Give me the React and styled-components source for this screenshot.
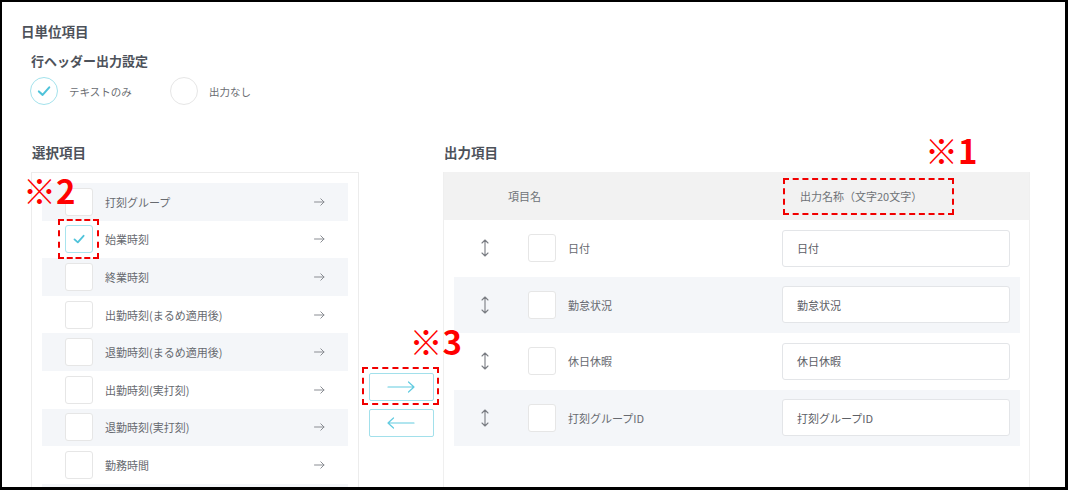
import React from 'react';
import styled, { createGlobalStyle } from 'styled-components';

const GlobalStyle = createGlobalStyle`
  html, body { margin: 0; padding: 0; background: #fff; }
  body { font-family: "Noto Sans CJK JP", "Noto Sans", sans-serif; }
`;

const leftItems = [
  '打刻グループ',
  '始業時刻',
  '終業時刻',
  '出勤時刻(まるめ適用後)',
  '退勤時刻(まるめ適用後)',
  '出勤時刻(実打刻)',
  '退勤時刻(実打刻)',
  '勤務時間',
  '',
];

const outputItems = ['日付', '勤怠状況', '休日休暇', '打刻グループID'];

const CheckMark = ({ size = 14 }) => (
  <svg width={size} height={size} viewBox="0 0 14 14" fill="none">
    <path d="M2.5 7.4 L5.8 10.4 L11.6 3.8" stroke="#4fc3da" strokeWidth="1.8" strokeLinecap="round" strokeLinejoin="round" />
  </svg>
);

const SmallArrow = () => (
  <svg width="11" height="8" viewBox="0 0 11 8" fill="none">
    <path d="M0.5 4 H10 M6.8 0.8 L10 4 L6.8 7.2" stroke="#8a8d93" strokeWidth="1" strokeLinecap="round" strokeLinejoin="round" />
  </svg>
);

const LongArrow = ({ dir }) => (
  <svg width="28" height="12" viewBox="0 0 28 12" fill="none" style={dir === 'left' ? { transform: 'scaleX(-1)' } : undefined}>
    <path d="M1 6 H27 M21.5 1 L27 6 L21.5 11" stroke="#62cbe0" strokeWidth="1.2" strokeLinecap="round" strokeLinejoin="round" />
  </svg>
);

const DragIcon = () => (
  <svg width="10" height="18" viewBox="0 0 10 18" fill="none">
    <path d="M5 1 V17 M2 4 L5 1 L8 4 M2 14 L5 17 L8 14" stroke="#7a7d83" strokeWidth="1.1" strokeLinecap="round" strokeLinejoin="round" />
  </svg>
);

const App = () => {
  return (
    <>
      <GlobalStyle />
      <Frame>
        <Title>日単位項目</Title>
        <Section>
          <SubTitle>行ヘッダー出力設定</SubTitle>
          <RadioGroup>
            <RadioOption>
              <RadioCircle $checked>
                <CheckMark size={16} />
              </RadioCircle>
              <RadioLabel>テキストのみ</RadioLabel>
            </RadioOption>
            <RadioOption>
              <RadioCircle />
              <RadioLabel>出力なし</RadioLabel>
            </RadioOption>
          </RadioGroup>

          <Lists>
            <LeftColumn>
              <ColumnTitle>選択項目</ColumnTitle>
              <ListPanel>
                {leftItems.map((label, i) => (
                  <ListRow key={i} $odd={i % 2 === 0}>
                    {i === 1 ? (
                      <Marked $inset="-6px -6px -6px -7px">
                        <Checkbox $checked>
                          <CheckMark />
                        </Checkbox>
                        <Note $x={-42} $y={-51}>※2</Note>
                      </Marked>
                    ) : (
                      <Checkbox />
                    )}
                    <RowLabel>{label}</RowLabel>
                    <SmallArrow />
                  </ListRow>
                ))}
              </ListPanel>
            </LeftColumn>

            <MiddleColumn>
              <Marked $inset="-6px -5px -4px -7px">
                <MoveButton>
                  <LongArrow />
                </MoveButton>
                <Note $x={41} $y={-48}>※3</Note>
              </Marked>
              <MoveButton>
                <LongArrow dir="left" />
              </MoveButton>
            </MiddleColumn>

            <RightColumn>
              <ColumnTitle>出力項目</ColumnTitle>
              <TablePanel>
                <TableHeader>
                  <HeaderName>項目名</HeaderName>
                  <Marked $inset="0">
                    <HeaderCell>出力名称（文字20文字）</HeaderCell>
                    <Note $x={142} $y={-44}>※1</Note>
                  </Marked>
                </TableHeader>
                {outputItems.map((label, i) => (
                  <TableRow key={label} $odd={i % 2 === 1}>
                    <DragHandle>
                      <DragIcon />
                    </DragHandle>
                    <Checkbox />
                    <ItemName>{label}</ItemName>
                    <NameInput>{label}</NameInput>
                  </TableRow>
                ))}
              </TablePanel>
            </RightColumn>
          </Lists>
        </Section>
      </Frame>
    </>
  );
};

const Frame = styled.div`
  position: relative;
  box-sizing: border-box;
  width: 1068px;
  height: 490px;
  overflow: hidden;
  border: 2px solid #000;
  border-right-width: 3px;
  border-bottom-width: 3px;
  padding: 19px 0 0 19px;
  background: #fff;
`;

const Title = styled.div`
  font-size: 13.5px;
  font-weight: 700;
  line-height: 20px;
  color: #4d525a;
`;

const Section = styled.div`
  padding-left: 10px;
  margin-top: 10px;
`;

const SubTitle = styled.div`
  font-size: 13px;
  font-weight: 700;
  line-height: 20px;
  color: #4d525a;
`;

const RadioGroup = styled.div`
  display: grid;
  grid-template-columns: 140px auto;
  justify-content: start;
  margin-top: 6px;
  margin-left: -1px;
`;

const RadioOption = styled.div`
  display: flex;
  align-items: center;
  gap: 11px;
`;

const RadioCircle = styled.div`
  box-sizing: border-box;
  width: 28px;
  height: 28px;
  border-radius: 50%;
  border: 1px solid ${p => (p.$checked ? '#a3e2ec' : '#e6e6e6')};
  display: flex;
  align-items: center;
  justify-content: center;
`;

const RadioLabel = styled.span`
  font-size: 10.5px;
  color: #6a6d72;
`;

const Lists = styled.div`
  display: flex;
  margin-top: 37px;
`;

const LeftColumn = styled.div`
  width: 328px;
  flex-shrink: 0;
`;

const ColumnTitle = styled.div`
  font-size: 13.5px;
  font-weight: 700;
  line-height: 20px;
  color: #4d525a;
  margin-bottom: 10px;
  padding-left: 1px;
`;

const ListPanel = styled.div`
  box-sizing: border-box;
  border: 1px solid #ececec;
  padding: 10px;
  height: 360px;
`;

const ListRow = styled.div`
  display: flex;
  align-items: center;
  height: 37.6px;
  padding: 0 23px;
  background: ${p => (p.$odd ? '#f4f6f9' : '#fff')};
`;

const Checkbox = styled.div`
  box-sizing: border-box;
  width: 28px;
  height: 28px;
  flex-shrink: 0;
  border: 1px solid ${p => (p.$checked ? '#a8e4ee' : '#e6e6e6')};
  border-radius: 3px;
  background: #fff;
  display: flex;
  align-items: center;
  justify-content: center;
`;

const RowLabel = styled.span`
  flex: 1;
  margin-left: 12px;
  font-size: 11px;
  color: #676a70;
`;

const MiddleColumn = styled.div`
  width: 84px;
  flex-shrink: 0;
  display: flex;
  flex-direction: column;
  align-items: center;
  gap: 8px;
  padding-top: 231px;
`;

const MoveButton = styled.button`
  box-sizing: border-box;
  width: 65px;
  height: 28px;
  padding: 0;
  border: 1px solid #a2e0eb;
  border-radius: 2px;
  background: #fff;
  display: flex;
  align-items: center;
  justify-content: center;
`;

const RightColumn = styled.div`
  width: 587px;
  flex-shrink: 0;
`;

const TablePanel = styled.div`
  box-sizing: border-box;
  border: 1px solid #efefef;
  border-top: none;
  height: 360px;
`;

const TableHeader = styled.div`
  display: flex;
  align-items: center;
  height: 48px;
  background: #f2f2f2;
`;

const HeaderName = styled.span`
  width: 275px;
  padding-left: 64px;
  font-size: 11px;
  color: #6f7277;
`;

const HeaderCell = styled.span`
  box-sizing: border-box;
  display: flex;
  align-items: center;
  width: 171px;
  height: 37px;
  padding-left: 17px;
  font-size: 11px;
  color: #6f7277;
`;

const TableRow = styled.div`
  display: flex;
  align-items: center;
  height: 56.5px;
  margin: 0 9px 0 10px;
  padding-left: 26px;
  background: ${p => (p.$odd ? '#f4f6f9' : '#fff')};
`;

const DragHandle = styled.span`
  display: flex;
  width: 10px;
  margin-right: 38px;
`;

const ItemName = styled.span`
  width: 214px;
  margin-left: 12px;
  font-size: 11px;
  color: #676a70;
`;

const NameInput = styled.div`
  box-sizing: border-box;
  width: 228px;
  height: 37px;
  display: flex;
  align-items: center;
  padding-left: 14px;
  border: 1px solid #e3e5e8;
  border-radius: 3px;
  background: #fff;
  font-size: 11px;
  color: #5d6066;
`;

const Marked = styled.div`
  position: relative;
  display: inline-flex;

  &::after {
    content: '';
    position: absolute;
    inset: ${p => p.$inset};
    border: 2px dashed #f10000;
    pointer-events: none;
  }
`;

const Note = styled.span`
  position: absolute;
  left: ${p => p.$x}px;
  top: ${p => p.$y}px;
  font-family: "Noto Sans CJK JP", sans-serif;
  font-size: 33px;
  font-weight: 700;
  line-height: 1;
  color: #ff0000;
  white-space: nowrap;
  z-index: 2;
`;

export default App;
